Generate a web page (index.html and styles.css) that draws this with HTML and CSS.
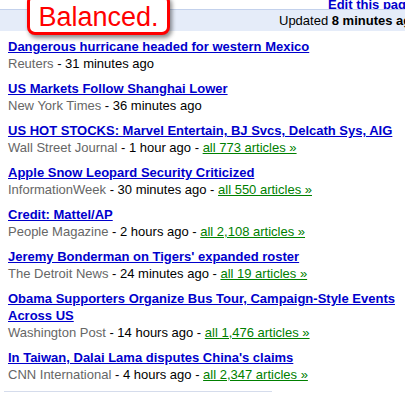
FILE: index.html
```html
<!DOCTYPE html>
<html lang="en">
<head>
    <meta charset="UTF-8">
    <title>Top Stories</title>
    <link rel="stylesheet" href="styles.css">
</head>
<body>
    <div class="page">
        <div class="top-links">
            <a href="#">Edit this page</a>
        </div>
        <div class="status-bar">
            <span>Updated <b>8 minutes ago</b></span>
        </div>
        <div class="callout">Balanced.</div>

        <div class="stories">
            <div class="story">
                <a class="headline" href="#">Dangerous hurricane headed for western Mexico</a>
                <div class="meta"><span class="source">Reuters</span> - 31 minutes ago</div>
            </div>
            <div class="story">
                <a class="headline" href="#">US Markets Follow Shanghai Lower</a>
                <div class="meta"><span class="source">New York Times</span> - 36 minutes ago</div>
            </div>
            <div class="story">
                <a class="headline" href="#">US HOT STOCKS: Marvel Entertain, BJ Svcs, Delcath Sys, AIG</a>
                <div class="meta"><span class="source">Wall Street Journal</span> - 1 hour ago - <a class="all" href="#">all 773 articles &raquo;</a></div>
            </div>
            <div class="story">
                <a class="headline" href="#">Apple Snow Leopard Security Criticized</a>
                <div class="meta"><span class="source">InformationWeek</span> - 30 minutes ago - <a class="all" href="#">all 550 articles &raquo;</a></div>
            </div>
            <div class="story">
                <a class="headline" href="#">Credit: Mattel/AP</a>
                <div class="meta"><span class="source">People Magazine</span> - 2 hours ago - <a class="all" href="#">all 2,108 articles &raquo;</a></div>
            </div>
            <div class="story">
                <a class="headline" href="#">Jeremy Bonderman on Tigers' expanded roster</a>
                <div class="meta"><span class="source">The Detroit News</span> - 24 minutes ago - <a class="all" href="#">all 19 articles &raquo;</a></div>
            </div>
            <div class="story">
                <a class="headline" href="#">Obama Supporters Organize Bus Tour, Campaign-Style Events Across US</a>
                <div class="meta"><span class="source">Washington Post</span> - 14 hours ago - <a class="all" href="#">all 1,476 articles &raquo;</a></div>
            </div>
            <div class="story">
                <a class="headline" href="#">In Taiwan, Dalai Lama disputes China's claims</a>
                <div class="meta"><span class="source">CNN International</span> - 4 hours ago - <a class="all" href="#">all 2,347 articles &raquo;</a></div>
            </div>
        </div>
        <div class="bottom-rule"></div>
    </div>
</body>
</html>
```
FILE: styles.css
```css
* {
    margin: 0;
    padding: 0;
    box-sizing: border-box;
}

html, body {
    width: 100%;
    height: 100%;
    background: #ffffff;
    overflow: hidden;
}

body {
    font-family: "Liberation Sans", Arial, sans-serif;
    font-size: 13px;
    color: #000;
}

.page {
    position: relative;
    width: 405px;
}

.top-links {
    height: 9px;
    overflow: hidden;
    display: flex;
    align-items: flex-end;
    padding-left: 328px;
    white-space: nowrap;
}

.top-links a {
    color: #0000cc;
    font-weight: bold;
    line-height: 13px;
    margin-bottom: -2px;
}

.status-bar {
    height: 22px;
    border-top: 1px solid #c3d1ec;
    background: #e5ecf9;
    padding-left: 279px;
    white-space: nowrap;
    overflow: hidden;
    line-height: 21px;
}

.callout {
    position: absolute;
    left: 27px;
    top: -6px;
    width: 143px;
    height: 41px;
    padding-top: 6px;
    border: 3px solid #ff0000;
    border-radius: 8px;
    background: #ffffff;
    box-shadow: 2px 3px 4px rgba(0, 0, 0, 0.45);
    color: #ff0000;
    font-size: 27px;
    line-height: 28px;
    text-align: center;
}

.stories {
    padding: 7px 0 0 8px;
}

.story {
    margin-bottom: 8px;
    line-height: 17px;
}

.headline {
    color: #0000cc;
    font-weight: bold;
}

.meta {
    color: #000;
}

.source {
    color: #666666;
}

.all {
    color: #008000;
}

.bottom-rule {
    margin: 7px 0 0 4px;
    width: 268px;
    border-top: 1px solid #d5dcec;
}
```
